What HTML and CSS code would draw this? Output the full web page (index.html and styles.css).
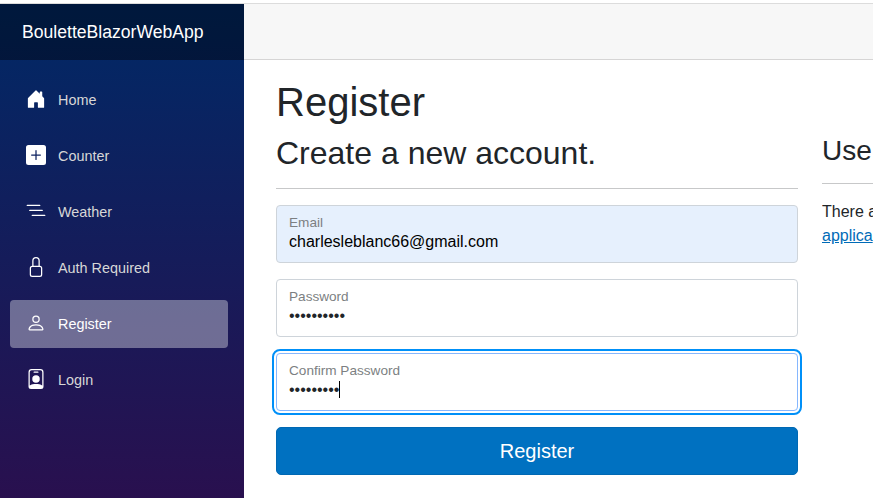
FILE: index.html
```html
<!DOCTYPE html>
<html lang="en">
<head>
<meta charset="utf-8">
<title>Register</title>
<link rel="stylesheet" href="styles.css">
</head>
<body>
<div class="page">
  <aside class="sidebar">
    <div class="brand">BouletteBlazorWebApp</div>
    <nav class="nav">
      <a class="nav-link"><svg class="icon" viewBox="0 0 16 16"><path d="M6.5 14.5v-3.505c0-.245.25-.495.5-.495h2c.25 0 .5.25.5.5v3.5a.5.5 0 0 0 .5.5h4a.5.5 0 0 0 .5-.5v-7a.5.5 0 0 0-.146-.354L13 5.793V2.5a.5.5 0 0 0-.5-.5h-1a.5.5 0 0 0-.5.5v1.293L8.354 1.146a.5.5 0 0 0-.708 0l-6 6A.5.5 0 0 0 1.5 7.5v7a.5.5 0 0 0 .5.5h4a.5.5 0 0 0 .5-.5Z"/></svg><span>Home</span></a>
      <a class="nav-link"><svg class="icon" viewBox="0 0 16 16"><path d="M2 0a2 2 0 0 0-2 2v12a2 2 0 0 0 2 2h12a2 2 0 0 0 2-2V2a2 2 0 0 0-2-2H2zm6.5 4.5v3h3a.5.5 0 0 1 0 1h-3v3a.5.5 0 0 1-1 0v-3h-3a.5.5 0 0 1 0-1h3v-3a.5.5 0 0 1 1 0z"/></svg><span>Counter</span></a>
      <a class="nav-link"><svg class="icon" viewBox="0 0 16 16"><path d="M4.5 11.5A.5.5 0 0 1 5 11h10a.5.5 0 0 1 0 1H5a.5.5 0 0 1-.5-.5zm-2-4A.5.5 0 0 1 3 7h10a.5.5 0 0 1 0 1H3a.5.5 0 0 1-.5-.5zm-2-4A.5.5 0 0 1 1 3h10a.5.5 0 0 1 0 1H1a.5.5 0 0 1-.5-.5z"/></svg><span>Weather</span></a>
      <a class="nav-link"><svg class="icon" viewBox="0 0 16 16"><path d="M8 1a2 2 0 0 1 2 2v4H6V3a2 2 0 0 1 2-2zm3 6V3a3 3 0 0 0-6 0v4a2 2 0 0 0-2 2v5a2 2 0 0 0 2 2h6a2 2 0 0 0 2-2V9a2 2 0 0 0-2-2zM5 8h6a1 1 0 0 1 1 1v5a1 1 0 0 1-1 1H5a1 1 0 0 1-1-1V9a1 1 0 0 1 1-1z"/></svg><span>Auth Required</span></a>
      <a class="nav-link active"><svg class="icon" viewBox="0 0 16 16"><path d="M8 8a3 3 0 1 0 0-6 3 3 0 0 0 0 6Zm2-3a2 2 0 1 1-4 0 2 2 0 0 1 4 0Zm4 8c0 1-1 1-1 1H3s-1 0-1-1 1-4 6-4 6 3 6 4Zm-1-.004c-.001-.246-.154-.986-.832-1.664C11.516 10.68 10.289 10 8 10c-2.29 0-3.516.68-4.168 1.332-.678.678-.83 1.418-.832 1.664h10Z"/></svg><span>Register</span></a>
      <a class="nav-link"><svg class="icon" viewBox="0 0 16 16"><path d="M6.5 2a.5.5 0 0 0 0 1h3a.5.5 0 0 0 0-1h-3zM11 8a3 3 0 1 1-6 0 3 3 0 0 1 6 0z"/><path d="M4.5 0A2.5 2.5 0 0 0 2 2.5V14a2 2 0 0 0 2 2h8a2 2 0 0 0 2-2V2.5A2.5 2.5 0 0 0 11.5 0h-7zM3 2.5A1.5 1.5 0 0 1 4.5 1h7A1.5 1.5 0 0 1 13 2.5v10.795a4.2 4.2 0 0 0-.776-.492C11.392 12.387 10.063 12 8 12s-3.392.387-4.224.803a4.2 4.2 0 0 0-.776.492V2.5z"/></svg><span>Login</span></a>
    </nav>
  </aside>
  <main class="main">
    <div class="top-row"></div>
    <article class="content">
      <h1>Register</h1>
      <div class="columns">
        <form class="form">
          <h2>Create a new account.</h2>
          <hr>
          <div class="field filled"><span class="label">Email</span><span class="value">charlesleblanc66@gmail.com</span></div>
          <div class="field"><span class="label">Password</span><span class="value">••••••••••</span></div>
          <div class="field focused"><span class="label">Confirm Password</span><span class="value">•••••••••<i class="caret"></i></span></div>
          <button class="submit" type="button">Register</button>
        </form>
        <section class="external">
          <h3>Use</h3>
          <hr>
          <p>There a<br><a class="link">applica</a></p>
        </section>
      </div>
    </article>
  </main>
</div>
</body>
</html>
```
FILE: styles.css
```css
* { box-sizing: border-box; }
body {
  margin: 0;
  height: 498px;
  overflow: hidden;
  background: #fff;
  color: #212529;
  font: 16px/1.5 "Liberation Sans", Arial, sans-serif;
}
.page {
  display: flex;
  height: 498px;
  padding-top: 4px;
  background: linear-gradient(#dcdcdc, #dcdcdc) 0 3px / 100% 1px no-repeat;
}
.sidebar {
  flex: 0 0 244px;
  height: 494px;
  background: linear-gradient(180deg, #002966 0, #390646 686px);
}
.brand {
  height: 56px;
  padding-left: 22px;
  background: rgba(0, 0, 0, .4);
  color: #fff;
  font-size: 17.6px;
  line-height: 56px;
}
.nav { display: flex; flex-direction: column; gap: 8px; padding: 16px 16px 0 10px; }
.nav-link {
  display: flex;
  align-items: center;
  height: 48px;
  padding-left: 16px;
  border-radius: 4px;
  color: #d7d7d7;
  font-size: 14.4px;
  line-height: 24px;
}
.icon { width: 20px; height: 20px; margin: 0 12px 2px 0; fill: #fff; }
.active { background: rgba(255, 255, 255, .37); color: #fff; }
.main { flex: 1; min-width: 0; }
.top-row { height: 56px; background: #f7f7f7; border-bottom: 1px solid #d6d5d5; }
.content { padding: 17.6px 0 0 32px; }
h1, h2, h3 { margin: 0 0 8px; font-weight: 400; line-height: 1.2; }
h1 { font-size: 40px; }
h2 { font-size: 32px; }
h3 { font-size: 28px; }
hr { margin: 16px 0; border: 0; border-top: 1px solid #c7c8c9; }
.columns { display: flex; gap: 24px; }
.form { flex: 0 0 522px; }
.field {
  display: flex;
  flex-direction: column;
  height: 58px;
  margin-bottom: 16px;
  padding: 8px 12px 0;
  border: 1px solid #ced4da;
  border-radius: 4px;
  background: #fff;
}
.filled { background: #e6f0fd; color: #000; }
.focused { border-color: #86b7fe; outline: 2px solid #0090f8; outline-offset: 2px; }
.label { color: #7c7f82; font-size: 13.6px; line-height: 18px; }
.value { display: flex; align-items: center; height: 20px; line-height: 20px; }
.caret { width: 1px; height: 17px; background: #000; }
.submit {
  display: block;
  width: 100%;
  height: 48px;
  border: 1px solid #0068b3;
  border-radius: 5px;
  background: #0071c1;
  color: #fff;
  font: 20px/30px "Liberation Sans", Arial, sans-serif;
}
.external { flex: 1; min-width: 0; overflow: hidden; white-space: nowrap; }
.external p { margin: 0; }
.link { color: #006bb7; text-decoration: underline; }
```
